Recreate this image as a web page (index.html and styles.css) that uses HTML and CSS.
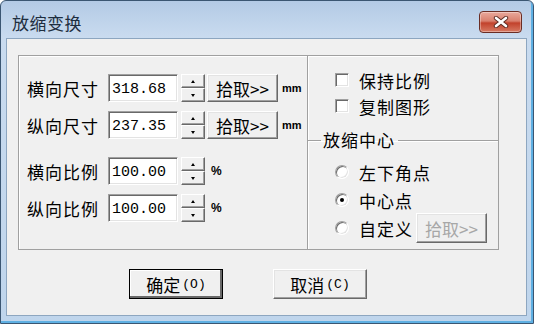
FILE: index.html
```html
<!DOCTYPE html>
<html lang="zh-CN">
<head>
  <meta charset="UTF-8" />
  <title>放缩变换</title>
  <link rel="stylesheet" href="styles.css">
</head>
<body>

  <div class="window">
    <!-- 标题栏 -->
    <div class="titlebar">
      <span class="title">放缩变换</span>
      <button class="close-btn" aria-label="关闭">
        <svg width="16" height="12" viewBox="0 0 16 12">
          <path d="M3 2 L13 10 M13 2 L3 10" stroke="#5a2a22" stroke-width="4.4" stroke-linecap="round"/>
          <path d="M3 2 L13 10 M13 2 L3 10" stroke="#fff" stroke-width="2.6" stroke-linecap="round"/>
        </svg>
      </button>
    </div>

    <div class="client">
      <div class="groups">

        <!-- 尺寸 / 比例 -->
        <fieldset class="group group-left">
          <div class="row">
            <label class="lbl">横向尺寸</label>
            <input class="num" value="318.68">
            <span class="spin"><span class="spin-up"></span><span class="spin-down"></span></span>
            <button class="btn pick">拾取&gt;&gt;</button>
            <span class="unit">mm</span>
          </div>
          <div class="row">
            <label class="lbl">纵向尺寸</label>
            <input class="num" value="237.35">
            <span class="spin"><span class="spin-up"></span><span class="spin-down"></span></span>
            <button class="btn pick">拾取&gt;&gt;</button>
            <span class="unit">mm</span>
          </div>
          <div class="row row-ratio">
            <label class="lbl">横向比例</label>
            <input class="num" value="100.00">
            <span class="spin"><span class="spin-up"></span><span class="spin-down"></span></span>
            <span class="unit pct">%</span>
          </div>
          <div class="row">
            <label class="lbl">纵向比例</label>
            <input class="num" value="100.00">
            <span class="spin"><span class="spin-up"></span><span class="spin-down"></span></span>
            <span class="unit pct">%</span>
          </div>
        </fieldset>

        <!-- 选项 / 放缩中心 -->
        <div class="group group-right">
          <div class="checks">
            <label class="check"><span class="box"></span>保持比例</label>
            <label class="check"><span class="box"></span>复制图形</label>
          </div>
          <fieldset class="center">
            <legend>放缩中心</legend>
            <div class="radios">
              <label class="radio"><span class="dot"></span>左下角点</label>
              <label class="radio"><span class="dot checked"></span>中心点</label>
              <label class="radio"><span class="dot"></span>自定义<button class="btn pick disabled">拾取&gt;&gt;</button></label>
            </div>
          </fieldset>
        </div>
      </div>

      <!-- 确定 / 取消 -->
      <div class="actions">
        <button class="btn action default">确定<span class="key">(O)</span></button>
        <button class="btn action">取消<span class="key">(C)</span></button>
      </div>
    </div>
  </div>

</body>
</html>
```

FILE: styles.css
```css
/* Reset */
*{margin:0;padding:0;box-sizing:border-box}

body{
  background:#fff;
  font-family:"Noto Sans CJK SC","Noto Sans",sans-serif;
  font-size:17px;color:#000
}

/* === Ventana === */
.window{
  width:534px;height:324px;
  border:1px solid #3b5672;border-radius:6px 6px 0 0;
  background:linear-gradient(#b3cae5,#c9dbef 36px,#bfd5ec);
  box-shadow:inset -2px -2px 0 #5fb0e3;
  padding:0 6px 7px 5px;
  display:flex;flex-direction:column
}
.titlebar{
  height:37px;display:flex;align-items:center;justify-content:space-between;
  padding-left:6px
}
.title{font-size:17px;letter-spacing:.5px;color:#1e2e40;margin-top:6px}
.close-btn{
  width:43px;height:22px;margin-top:4px;margin-right:5px;
  border:1px solid #6a2d24;border-radius:4px;
  background:linear-gradient(#e9a99c,#d9806e 45%,#c2422c 55%,#d77a63);
  box-shadow:inset 0 0 0 1px rgba(255,255,255,.35);
  display:flex;justify-content:center;align-items:center
}

.client{
  flex:1;background:#f0f0f0;border:1px solid #8da6c0;
  padding:16px 0 0 11px
}

/* === Grupos === */
.groups{display:flex;height:195px}
.group{border:1px solid #a0a0a0;box-shadow:inset 1px 1px 0 #fff}
.group-left{width:290px;padding:18px 0 0 8px}
.group-right{width:191px;border-left:none;display:flex;flex-direction:column}

.row{display:flex;align-items:center;height:28px;margin-bottom:9px}
.row-ratio{margin-top:18px}
.lbl{width:81px;letter-spacing:1px;white-space:nowrap}

.num{
  width:70px;height:28px;background:#fff;
  border:1px solid;border-color:#a0a0a0 #fff #fff #a0a0a0;
  box-shadow:inset 1px 1px 0 #696969,inset -1px -1px 0 #e3e3e3;
  font-family:"Liberation Mono",monospace;font-size:15px;
  padding:2px 0 0 3px;outline:none
}

.spin{display:flex;flex-direction:column;width:24px;height:28px;margin-left:3px}
.spin span{
  flex:1;background:#f0f0f0;display:flex;justify-content:center;align-items:center;
  border:1px solid;border-color:#fff #696969 #696969 #fff;
  box-shadow:inset -1px -1px 0 #a0a0a0
}
.spin-up::before,.spin-down::before{
  content:"";border-left:2px solid transparent;border-right:2px solid transparent
}
.spin-up::before{border-bottom:3px solid #000}
.spin-down::before{border-top:3px solid #000}

/* Botones */
.btn{
  background:#f0f0f0;font-family:inherit;font-size:17px;color:#000;
  border:1px solid;border-color:#fff #696969 #696969 #fff;
  box-shadow:inset -1px -1px 0 #a0a0a0,inset 1px 1px 0 #e3e3e3
}
.pick{width:71px;height:28px;margin-left:2px;padding-top:1px}
.unit{font-family:"Liberation Sans",sans-serif;font-size:11px;font-weight:700;margin-left:4px}
.pct{margin-left:6px;font-size:12px}

/* Checks */
.checks{padding:11px 0 0 27px;height:75px}
.check{display:flex;align-items:center;height:26px;letter-spacing:1px}
.box,.dot{
  width:14px;height:14px;background:#fff;margin-right:10px;
  border:1px solid;border-color:#a0a0a0 #fff #fff #a0a0a0;
  box-shadow:inset 1px 1px 0 #696969,inset -1px -1px 0 #e3e3e3
}

/* Radios */
.center{flex:1;border:none;border-top:1px solid #a0a0a0;box-shadow:0 1px 0 #fff inset}
.center legend{margin-left:13px;padding:0 3px 0 2px;letter-spacing:1px;line-height:18px}
.radios{padding:9px 0 0 27px}
.radio{display:flex;align-items:center;height:28px;letter-spacing:1px}
.dot{border-radius:50%;display:flex;justify-content:center;align-items:center}
.dot.checked::before{content:"";width:4px;height:4px;border-radius:50%;background:#000}
.disabled{color:#a7a7a7;margin-left:3px;height:30px;letter-spacing:0}

/* Acciones */
.actions{display:flex;gap:50px;margin:19px 0 0 111px}
.action{width:94px;height:30px;display:flex;justify-content:center;align-items:center}
.key{font-family:"Liberation Mono",monospace;font-size:13px;margin-left:2px}
.default{border-color:#000;box-shadow:inset -2px -2px 0 #696969,inset 1px 1px 0 #fff}
```
